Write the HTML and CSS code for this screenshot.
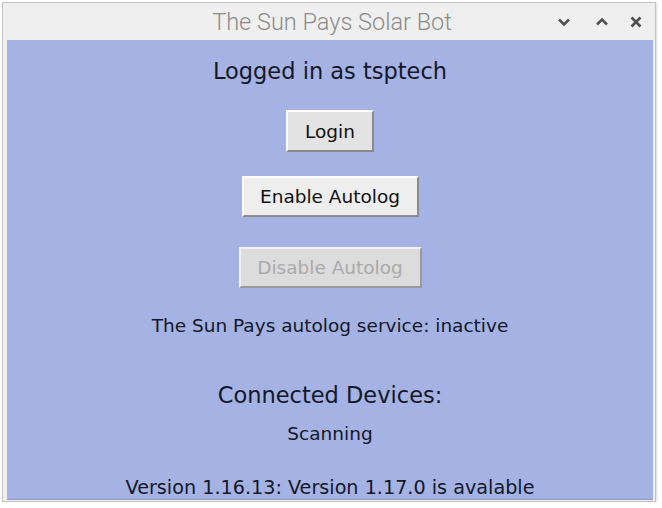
FILE: index.html
```html
<!DOCTYPE html>
<html>
<head>
<meta charset="utf-8">
<link rel="stylesheet" href="styles.css">
</head>
<body>
<div class="window">
  <div class="titlebar">
    <span class="title">The Sun Pays Solar Bot</span>
    <div class="controls">
      <svg class="ctl min" viewBox="0 0 14 14" width="14" height="14"><path d="M2 4.5 L7 9.5 L12 4.5" fill="none" stroke="#505050" stroke-width="2.6"/></svg>
      <svg class="ctl max" viewBox="0 0 14 14" width="14" height="14"><path d="M2 9.5 L7 4.5 L12 9.5" fill="none" stroke="#505050" stroke-width="2.6"/></svg>
      <svg class="ctl close" viewBox="0 0 14 14" width="14" height="14"><path d="M2.5 2.5 L11.5 11.5 M11.5 2.5 L2.5 11.5" fill="none" stroke="#505050" stroke-width="2.6"/></svg>
    </div>
  </div>
  <div class="content">
    <div class="big logged">Logged in as tsptech</div>
    <button class="btn login">Login</button>
    <button class="btn enable">Enable Autolog</button>
    <button class="btn disable" disabled>Disable Autolog</button>
    <div class="small service">The Sun Pays autolog service: inactive</div>
    <div class="big connected">Connected Devices:</div>
    <div class="small scanning">Scanning</div>
    <div class="small version">Version 1.16.13: Version 1.17.0 is avalable</div>
  </div>
</div>
</body>
</html>
```

FILE: styles.css
```css
html, body {
  margin: 0;
  padding: 0;
  background: #ffffff;
}
.window {
  margin: 2px 0 0 2px;
  width: 654px;
  height: 500px;
  border: 1px solid #c4c4c4;
  background: #efefef;
  padding: 0 2px 5px 4px;
  box-sizing: border-box;
  display: flex;
  flex-direction: column;
  box-shadow: 1px 1px 2px rgba(0,0,0,0.15);
}
.titlebar {
  height: 37px;
  flex: none;
  position: relative;
  display: flex;
  align-items: center;
  justify-content: center;
}
.title {
  font-family: Roboto, "Liberation Sans", sans-serif;
  font-size: 23.5px;
  color: #8c8c8c;
  font-weight: 300;
  margin-left: 4px;
}
.controls {
  position: absolute;
  right: 10px;
  top: 12px;
  display: flex;
}
.ctl { display: block; }
.max { margin-left: 24px; }
.close { margin-left: 20px; }
.content {
  flex: 1;
  background: #a4b2e4;
  border-bottom: 1px solid #8f9cc8;
  display: flex;
  flex-direction: column;
  align-items: center;
  font-family: "DejaVu Sans", sans-serif;
  color: #141828;
}
.big {
  font-size: 22.5px;
  line-height: 26px;
}
.small {
  font-size: 18.5px;
  line-height: 22px;
}
.logged { margin-top: 18px; }
.btn {
  font-family: "DejaVu Sans", sans-serif;
  font-size: 18.5px;
  color: #111;
  height: 42px;
  padding: 0;
  border-style: solid;
  border-width: 2px;
  border-color: #ffffff #8c8c8c #8c8c8c #ffffff;
  background: #e3e3e3;
}
.login { margin-top: 26px; width: 88px; }
.enable { margin-top: 24px; width: 177px; height: 41px; background: #eeeeee; }
.disable {
  margin-top: 30px;
  width: 183px;
  height: 41px;
  background: #dcdcdc;
  color: #aaaaaa;
  border-color: #f2f2f2 #9a9a9a #9a9a9a #f2f2f2;
}
.service { margin-top: 27px; }
.connected { margin-top: 45px; }
.scanning { margin-top: 15px; }
.version { margin-top: 32px; font-size: 19.2px; }
```
